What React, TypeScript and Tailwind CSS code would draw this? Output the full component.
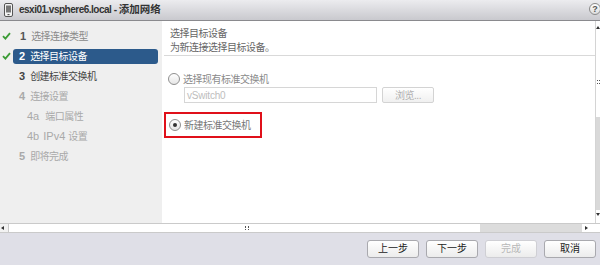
import React from 'react';

const font = { fontFamily: '"Liberation Sans", "Noto Sans CJK SC", sans-serif' };

function Check() {
  return (
    <svg width="9" height="8" viewBox="0 0 9 8" className="shrink-0">
      <path d="M1 4.2 L3.4 6.6 L8 1.2" fill="none" stroke="#3c9c36" strokeWidth="1.8" />
    </svg>
  );
}

function Radio({ checked }: { checked?: boolean }) {
  return (
    <span className="w-[12px] h-[12px] rounded-full border border-[#8f8f8f] bg-gradient-to-b from-white to-[#e6e6e6] flex items-center justify-center shrink-0">
      {checked && <span className="w-[4px] h-[4px] rounded-full bg-[#333]" />}
    </span>
  );
}

function Btn({ label, disabled }: { label: string; disabled?: boolean }) {
  return (
    <button
      className={`w-[52px] h-[18px] rounded-[3px] border text-[10px] leading-none flex items-center justify-center bg-gradient-to-b from-white to-[#ececec] ${
        disabled ? 'border-[#cfcfd4] text-[#b8b8b8]' : 'border-[#a9a9ae] text-[#222]'
      }`}
    >
      {label}
    </button>
  );
}

const cjk = 'text-[10px] tracking-[-0.5px]';

export default function App() {
  return (
    <div className="w-[600px] h-[265px] flex flex-col overflow-hidden bg-white" style={font}>
      {/* Title bar */}
      <div className="h-[21px] shrink-0 flex items-center bg-gradient-to-b from-[#ececef] to-[#c9c9ce] border-b border-[#8a8a8e] relative">
        <svg width="9" height="14" viewBox="0 0 9 14" className="ml-[4px]">
          <rect x="0.5" y="0.5" width="8" height="13" rx="1.5" fill="#f4f4f4" stroke="#555" />
          <rect x="2" y="2.5" width="5" height="7" fill="#777" />
          <rect x="3.5" y="11" width="2" height="1.2" fill="#555" />
        </svg>
        <span className="ml-[6px] text-[10px] font-bold text-[#333] tracking-[-0.5px] whitespace-nowrap">
          esxi01.vsphere6.local - <span className="text-[10.5px] tracking-[0px]">添加网络</span>
        </span>
        <span className="absolute left-[589px] top-[3px] w-[12px] h-[12px] rounded-full border border-[#8a8a8a] bg-gradient-to-b from-white to-[#dcdcdc] text-[9px] font-bold text-[#555] flex items-center justify-center leading-none">
          ?
        </span>
      </div>

      {/* Body */}
      <div className="h-[202px] shrink-0 flex">
        {/* Sidebar */}
        <div className="w-[162px] shrink-0 bg-[#efefef] pt-[5px] text-[11px]">
          <div className="h-[20px] flex items-center pl-[2px]">
            <Check />
            <span className="ml-[9px] font-bold text-[#555]">1</span>
            <span className={`ml-[5px] text-[#8a8a8a] ${cjk}`}>选择连接类型</span>
          </div>
          <div className="h-[20px] flex items-center pl-[2px]">
            <Check />
            <div className="ml-[2px] w-[145px] h-[15px] rounded-[3px] bg-[#2c5a8b] flex items-center pl-[6px] text-white">
              <span className="font-bold">2</span>
              <span className={`ml-[5px] ${cjk}`}>选择目标设备</span>
            </div>
          </div>
          <div className="h-[20px] flex items-center pl-[19px] text-[#444]">
            <span className="font-bold">3</span>
            <span className={`ml-[5px] ${cjk}`}>创建标准交换机</span>
          </div>
          <div className="h-[20px] flex items-center pl-[19px] text-[#a9a9a9]">
            <span className="font-bold">4</span>
            <span className={`ml-[5px] ${cjk}`}>连接设置</span>
          </div>
          <div className="h-[20px] flex items-center pl-[27px] text-[#a9a9a9]">
            <span>4a</span>
            <span className={`ml-[6px] ${cjk}`}>端口属性</span>
          </div>
          <div className="h-[20px] flex items-center pl-[27px] text-[#a9a9a9]">
            <span>4b</span>
            <span className="ml-[4px]">IPv4 <span className={cjk}>设置</span></span>
          </div>
          <div className="h-[20px] flex items-center pl-[19px] text-[#a9a9a9]">
            <span className="font-bold">5</span>
            <span className={`ml-[5px] ${cjk}`}>即将完成</span>
          </div>
        </div>

        {/* Content */}
        <div className={`flex-1 flex flex-col ${cjk}`}>
          <div className="ml-[2px] pt-[6px] h-[35px] border-b border-[#d9d9d9] pl-[6px] leading-[14px] text-[#666]">
            <div>选择目标设备</div>
            <div>为新连接选择目标设备。</div>
          </div>
          <div className="mt-[17px] ml-[6px] h-[12px] flex items-center">
            <Radio />
            <span className="ml-[3px] text-[#8a8a8a]">选择现有标准交换机</span>
          </div>
          <div className="mt-[2px] ml-[22px] flex items-center gap-[5px]">
            <div className="w-[193px] h-[16px] border border-[#d6d6d6] flex items-center pl-[2px] text-[10px] tracking-[-0.2px] text-[#bdbdbd]">vSwitch0</div>
            <div className="w-[52px] h-[16px] border border-[#d3d3d3] rounded-[2px] bg-gradient-to-b from-white to-[#f0f0f0] flex items-center justify-center text-[#b0b0b0]">
              浏览...
            </div>
          </div>
          <div className="mt-[9px] ml-[2px] w-[98px] h-[26px] border-2 border-[#e0101a] flex items-center pl-[3px] whitespace-nowrap">
            <Radio checked />
            <span className="ml-[3px] text-[#777]">新建标准交换机</span>
          </div>
        </div>

        {/* Vertical scrollbar */}
        <div className="w-[5px] shrink-0 border-l border-[#d4d4d4] flex flex-col items-center relative">
          <span className="mt-[5px] w-0 h-0 border-l-[2px] border-r-[2px] border-b-[3px] border-l-transparent border-r-transparent border-b-[#333]" />
          <span className="absolute top-[59px] left-[1px] w-[3px] h-[4px] border-y border-dotted border-[#555]" />
          <div className="mt-[88px] w-full h-[93px] bg-[#d9d9d9]" />
          <span className="mt-[3px] w-0 h-0 border-l-[2px] border-r-[2px] border-t-[3px] border-l-transparent border-r-transparent border-t-[#333]" />
        </div>
      </div>

      {/* Horizontal scrollbar */}
      <div className="h-[10px] shrink-0 flex border-y border-[#cacaca] bg-white relative">
        <div className="w-[9px] border-r border-[#cacaca] bg-[#f2f2f2] flex items-center pl-[1px]">
          <span className="w-0 h-0 border-t-[2px] border-b-[2px] border-r-[3px] border-t-transparent border-b-transparent border-r-[#333]" />
        </div>
        <span className="absolute left-[245px] top-[2px] w-[4px] h-[4px] border-x border-dotted border-[#555]" />
        <div className="ml-[471px] w-[102px] bg-[#dcdcdc]" />
        <div className="ml-[3px] flex items-center">
          <span className="w-0 h-0 border-t-[2px] border-b-[2px] border-l-[3px] border-t-transparent border-b-transparent border-l-[#333]" />
        </div>
      </div>

      {/* Footer */}
      <div className="flex-1 bg-[#dfdfe7] flex justify-end items-start pt-[7px] pr-[4px] gap-[7px]">
        <Btn label="上一步" />
        <Btn label="下一步" />
        <Btn label="完成" disabled />
        <Btn label="取消" />
      </div>
    </div>
  );
}
